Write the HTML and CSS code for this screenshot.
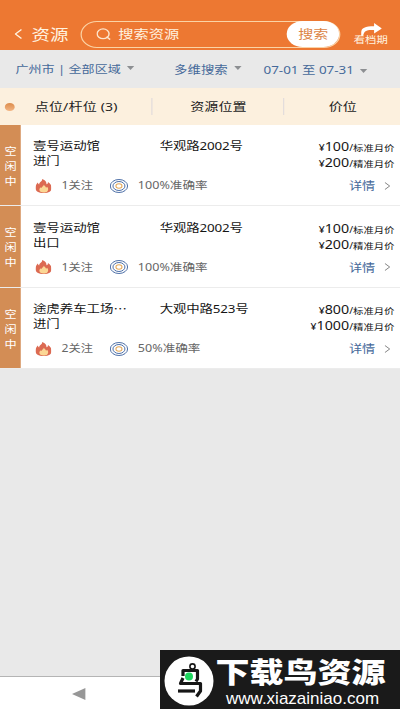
FILE: index.html
```html
<!DOCTYPE html>
<html lang="zh-CN">
<head>
<meta charset="utf-8">
<title>资源</title>
<link rel="stylesheet" href="styles.css">
</head>
<body>
<svg class="defs" width="0" height="0" aria-hidden="true">
  <symbol id="fire" viewBox="0 0 16 14" preserveAspectRatio="none">
    <path fill="#dc6a52" d="M6.6 0C10 1.2 11 3.2 10.9 5.3C12 4.8 12.4 3.9 12.3 2.9C14.8 4.6 16 6.8 16 9C16 12 13.2 14 8.2 14C3 14 0 12 0 8.9C0 6.6 1.3 5 2.4 3.6C2.6 4.6 3 5.2 3.7 5.4C3.6 3 6.9 2.8 6.6 0Z"/>
    <path fill="#fbd795" d="M8.2 5.8C9 7 10.2 7.3 10.4 8.7C11 8.6 11.3 8.2 11.4 7.8C12.8 9.2 12.9 11 11.8 12.2C11 13.2 9.8 13.6 8 13.6C5.5 13.6 3.8 12.4 3.9 10.6C4 9.5 4.6 8.8 5.1 8.2C5.3 8.8 5.5 9 5.9 9.1C5.9 7.6 8.2 7.6 8.2 5.8Z"/>
  </symbol>
  <symbol id="target" viewBox="0 0 18 14" preserveAspectRatio="none">
    <g fill="none" stroke="#4568a3">
      <ellipse cx="9" cy="7" rx="8.500" ry="6.500" stroke-width=".95"/>
      <ellipse cx="9" cy="7" rx="5.900" ry="4.500" stroke-width=".95"/>
    </g>
    <ellipse cx="9" cy="7" rx="3" ry="2.200" fill="#fff" stroke="#e6a959" stroke-width="1"/>
  </symbol>
  <symbol id="next" viewBox="0 0 5 8">
    <path d="M.5 .5L4.4 4L.5 7.5" fill="none" stroke="#777" stroke-width=".8"/>
  </symbol>
</svg>
<div class="screen">
  <header class="topbar">
    <svg class="back" viewBox="0 0 6 10"><path d="M5.6 .5L.6 5L5.6 9.5" fill="none" stroke="#fff3e0" stroke-width="1.1"/></svg>
    <h1 class="title">资源</h1>
    <div class="search">
      <svg class="lens" viewBox="0 0 12 12"><circle cx="5.5" cy="5.8" r="4.9" fill="none" stroke="#fde5cc" stroke-width="1.200"/><path d="M8.300 8.800L11.300 11.600" stroke="#fde5cc" stroke-width="1.300"/></svg>
      <span class="hint">搜索资源</span>
      <span class="go">搜索</span>
    </div>
    <div class="schedule">
      <svg class="share" viewBox="0 0 20 13" preserveAspectRatio="none"><path fill="#fff" d="M0 13V9.500C0 5 4 3.300 12.500 3.300V0L20 5.500L12.500 10.500V7C6 6.500 2.500 7.500 2 13Z"/></svg>
      <span class="label">看档期</span>
    </div>
  </header>
  <nav class="filters">
    <span class="area">广州市 | 全部区域<i class="caret"></i></span>
    <span class="multi">多维搜索<i class="caret"></i></span>
    <span class="dates">07-01 至 07-31<i class="caret low"></i></span>
  </nav>
  <div class="heads">
    <i class="dot"></i>
    <span class="h-name">点位/杆位 (3)</span>
    <span class="h-place">资源位置</span>
    <span class="h-price">价位</span>
  </div>
  <main class="list">
    <article class="row">
      <div class="state">空<br>闲<br>中</div>
      <div class="info">
        <div class="main">
          <div class="name">壹号运动馆<br>进门</div>
          <div class="place">华观路2002号</div>
          <div class="price"><div><small>¥</small>100<small>/标准月价</small></div><div><small>¥</small>200<small>/精准月价</small></div></div>
        </div>
        <div class="meta"><svg class="fire"><use href="#fire"/></svg><span class="follow">1关注</span><svg class="target"><use href="#target"/></svg><span class="rate">100%准确率</span><span class="detail">详情</span><svg class="next"><use href="#next"/></svg></div>
      </div>
    </article>
    <article class="row">
      <div class="state">空<br>闲<br>中</div>
      <div class="info">
        <div class="main">
          <div class="name">壹号运动馆<br>出口</div>
          <div class="place">华观路2002号</div>
          <div class="price"><div><small>¥</small>100<small>/标准月价</small></div><div><small>¥</small>200<small>/精准月价</small></div></div>
        </div>
        <div class="meta"><svg class="fire"><use href="#fire"/></svg><span class="follow">1关注</span><svg class="target"><use href="#target"/></svg><span class="rate">100%准确率</span><span class="detail">详情</span><svg class="next"><use href="#next"/></svg></div>
      </div>
    </article>
    <article class="row">
      <div class="state">空<br>闲<br>中</div>
      <div class="info">
        <div class="main">
          <div class="name">途虎养车工场<span class="dots">⋯</span><br>进门</div>
          <div class="place">大观中路523号</div>
          <div class="price"><div><small>¥</small>800<small>/标准月价</small></div><div><small>¥</small>1000<small>/精准月价</small></div></div>
        </div>
        <div class="meta"><svg class="fire"><use href="#fire"/></svg><span class="follow">2关注</span><svg class="target"><use href="#target"/></svg><span class="rate">50%准确率</span><span class="detail">详情</span><svg class="next"><use href="#next"/></svg></div>
      </div>
    </article>
  </main>
  <footer class="sysnav"><i class="sysback"></i></footer>
</div>
<aside class="mark">
  <svg class="logo" viewBox="0 0 50 50">
    <circle cx="25" cy="25" r="24.5" fill="#fff"/>
    <circle cx="28.500" cy="10.500" r="2.600" fill="none" stroke="#161616" stroke-width="1.600"/>
    <g fill="none" stroke="#161616" stroke-width="3.200" stroke-linejoin="round">
      <path d="M19 20V14.500H33.500V23L32 25.500"/>
      <path d="M19 22L16.500 27.500H36.500V35L32.500 40.500"/>
      <path d="M14 35H31"/>
    </g>
    <circle cx="25" cy="20.500" r="4" fill="#1fd65f"/>
  </svg>
  <div class="words">
    <div class="brand">下载鸟资源</div>
    <div class="url">www.xiazainiao.com</div>
  </div>
</aside>
</body>
</html>
```
FILE: styles.css
```css
* { box-sizing: border-box; }
body {
  margin: 0;
  width: 400px;
  height: 711px;
  overflow: hidden;
  background: #fff;
  font-family: "Noto Sans", "Noto Sans CJK SC", sans-serif;
}
.defs { display: block; }
svg, i { display: block; flex: none; }

/* The interface is drawn 328px wide and stretched to the full 400px */
.screen {
  display: flex;
  flex-direction: column;
  width: 327.87px;
  height: 711px;
  transform: scaleX(1.22);
  transform-origin: 0 0;
  background: #e9e9e9;
  font-size: 11px;
  line-height: 15px;
  white-space: nowrap;
}
.topbar {
  display: flex;
  align-items: center;
  height: 50px;
  padding: 18px 0 0 12.4px;
  background: #ed7832;
  color: #fff3e0;
}
.back { width: 6px; height: 10px; }
.title {
  width: 40.6px;
  margin: 0 0 0 7.4px;
  font-size: 15.2px;
  font-weight: 400;
  line-height: 20px;
}
.search {
  display: flex;
  align-items: center;
  width: 213px;
  height: 27px;
  padding-left: 12px;
  border: 1px solid #fbd3a5;
  border-radius: 14px;
}
.lens { width: 12px; height: 12px; }
.hint { flex: 1; margin-left: 5.500px; font-size: 12.5px; }
.go {
  width: 43px;
  height: 26px;
  border-radius: 13px;
  background: #fff;
  color: #dc8444;
  font-size: 12.3px;
  line-height: 27px;
  text-align: center;
}
.schedule { position: relative; width: 28px; height: 26px; margin-left: 10.6px; }
.share { position: absolute; left: 6px; top: 2px; width: 17px; height: 13px; }
.label { position: absolute; left: 0; top: 12px; font-size: 9.3px; line-height: 14px; }

.filters {
  display: grid;
  grid-template-columns: 130px 73.300px 1fr;
  align-items: center;
  height: 38px;
  padding-left: 12.700px;
  color: #46699a;
}
.filters span { display: flex; align-items: center; }
.area { font-size: 10.700px; }
.caret {
  margin: -2px 0 0 6px;
  border: solid transparent;
  border-width: 4px 3.2px 0;
  border-top-color: #8d8f92;
}
.area .caret { margin-left: 5px; }
.dates .caret { margin-left: 5px; }
.multi .caret { margin-left: 5.300px; }
.caret.low { margin-top: 4px; }

.heads {
  display: grid;
  grid-template-columns: 24.500px 96px 108px 1fr;
  align-items: center;
  height: 37px;
  padding-left: 4px;
  background: #fcf0de;
  color: #222;
  font-size: 11.500px;
  line-height: 17px;
}
.dot { width: 8.400px; height: 8px; border-radius: 50%; background: linear-gradient(#dc8c4c, #f3b583); }
.h-name { border-right: 1px solid #e2dcdc; letter-spacing: .12px; }
.h-place { padding-left: 31.500px; border-right: 1px solid #e2dcdc; }
.h-price { padding-left: 37px; }

.list { flex: 1; }
.row {
  display: flex;
  height: 81.400px;
  border-bottom: 1px solid #ececec;
  background: #fff;
}
.state {
  width: 17.200px;
  padding-top: 19px;
  background: #d38d55;
  color: #fff;
  font-size: 10px;
  text-align: center;
}
.info { flex: 1; padding: 13.300px 4.500px 0 9.800px; color: #151515; }
.main { display: grid; grid-template-columns: 104px 80px 1fr; height: 39px; }
.dots { font-family: "Noto Sans CJK SC", sans-serif; }
.place { letter-spacing: -.15px; }
.price { text-align: right; line-height: 16px; font-size: 11.700px; }
.price > div { height: 16px; }
.price small { font-size: 8.500px; }
.meta { display: flex; align-items: center; height: 17px; color: #666; font-size: 10px; }
.fire { width: 13.400px; height: 14px; margin-left: 2px; }
.follow { width: 40px; margin-left: 8px; }
.target { width: 15px; height: 14px; }
.rate { flex: 1; margin-left: 7.600px; font-size: 10.300px; }
.detail { color: #46699a; font-size: 10.800px; }
.next { width: 5px; height: 8px; margin: 0 3.300px 0 7.500px; }

.sysnav {
  height: 35px;
  padding: 10.500px 0 0 59px;
  border-top: 1px solid #b4b4b4;
  background: #fff;
}
.sysback {
  width: 0;
  border: solid transparent;
  border-width: 6.500px 11px 6.500px 0;
  border-right-color: #979797;
}

.mark {
  position: absolute;
  left: 160px;
  top: 650px;
  display: flex;
  width: 240px;
  height: 59px;
  padding: 5.500px 0 0 3.500px;
  background: #1a1a1a;
  color: #fff;
  white-space: nowrap;
}
.logo { width: 50px; height: 50px; }
.words { margin-left: 2px; }
.brand {
  height: 32px;
  font: 900 34px/34px "Noto Sans CJK SC", sans-serif;
  transform: translateY(-1px) scaleY(.83);
}
.url {
  padding-left: 10.500px;
  font: 17px/22px "Liberation Sans", sans-serif;
}
```
